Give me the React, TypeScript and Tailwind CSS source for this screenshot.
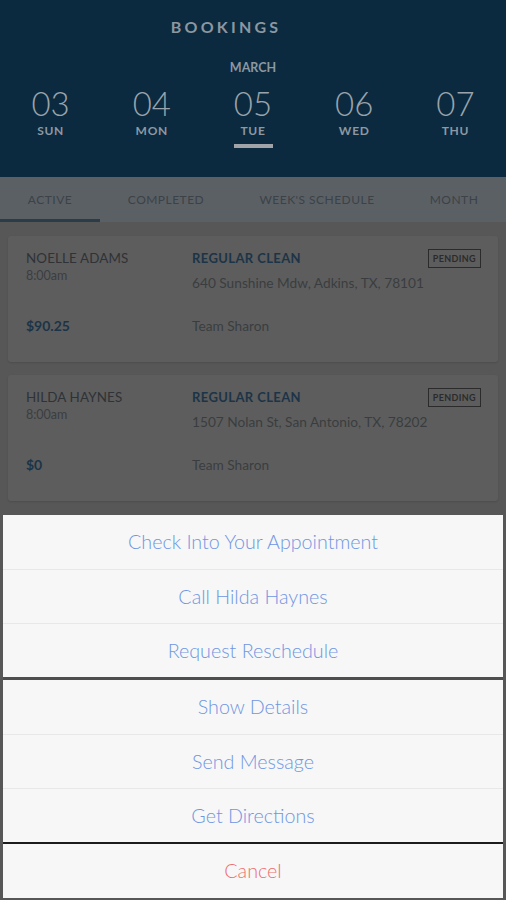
import { Fragment } from "react";

const days = [
  { num: "03", name: "SUN" },
  { num: "04", name: "MON" },
  { num: "05", name: "TUE", active: true },
  { num: "06", name: "WED" },
  { num: "07", name: "THU" },
];

const tabs = [
  { label: "ACTIVE", w: "w-[100px]", active: true },
  { label: "COMPLETED", w: "w-[132px]" },
  { label: "WEEK'S SCHEDULE", w: "w-[170px]" },
  { label: "MONTH", w: "flex-1" },
];

const bookings = [
  {
    name: "NOELLE ADAMS",
    time: "8:00am",
    price: "$90.25",
    service: "REGULAR CLEAN",
    address: "640 Sunshine Mdw, Adkins, TX, 78101",
    team: "Team Sharon",
  },
  {
    name: "HILDA HAYNES",
    time: "8:00am",
    price: "$0",
    service: "REGULAR CLEAN",
    address: "1507 Nolan St, San Antonio, TX, 78202",
    team: "Team Sharon",
  },
];

const groups = [
  ["Check Into Your Appointment", "Call Hilda Haynes", "Request Reschedule"],
  ["Show Details", "Send Message", "Get Directions"],
];

function BookingCard({ b }: { b: (typeof bookings)[number] }) {
  return (
    <div className="mx-2 flex h-[126px] rounded-[3px] bg-[#5d5d5d] pl-[18px] pr-[17px] pt-[14px] shadow-[0_1px_2px_rgba(0,0,0,0.12)]">
      <div className="flex w-[166px] flex-col pb-[28px]">
        <div className="text-[13.4px] leading-4 tracking-[0.01em] text-[#2f3236]">{b.name}</div>
        <div className="mt-[2px] text-[12.5px] leading-4 text-[#3b3e42]">{b.time}</div>
        <div className="mt-auto text-[14px] font-bold leading-4 text-[#1c3447]">{b.price}</div>
      </div>
      <div className="flex flex-1 flex-col pb-[28px]">
        <div className="flex items-start justify-between">
          <div className="text-[13px] font-bold leading-4 tracking-[0.03em] text-[#1c3447]">{b.service}</div>
          <div className="-mt-[1px] flex h-[19px] items-center border-[1.5px] border-[#2b2b2b] px-[4px] text-[9px] font-bold tracking-[0.04em] text-[#2b2b2b]">
            PENDING
          </div>
        </div>
        <div className="mt-[7px] text-[13.7px] leading-4 text-[#3a3d40]">{b.address}</div>
        <div className="mt-auto text-[13.7px] leading-4 text-[#3a3d40]">{b.team}</div>
      </div>
    </div>
  );
}

export default function App() {
  return (
    <div className="relative h-[900px] w-[506px] overflow-hidden bg-[#575757] font-['Lato','Noto_Sans',sans-serif]">
      <div className="flex h-[177px] flex-col items-center bg-[#0b2a3f] pt-[17px]">
        <div className="pr-[54px] text-[16px] font-bold leading-5 tracking-[0.2em] text-[#8c97a1]">BOOKINGS</div>
        <div className="mt-[23px] text-[12.5px] font-bold leading-4 text-[#8c97a1]">MARCH</div>
        <div className="mt-[11px] flex w-full">
          {days.map((d) => (
            <div key={d.num} className="flex flex-1 flex-col items-center">
              <div className="text-[33px] font-light leading-8 text-[#9aa3ab]">{d.num}</div>
              <div className="mt-[5px] text-[12px] font-bold leading-[14px] tracking-[0.06em] text-[#8d98a2]">{d.name}</div>
              {d.active && <div className="mt-[6px] h-[4px] w-[39px] bg-[#a0a4a8]" />}
            </div>
          ))}
        </div>
      </div>

      <div className="flex h-[45px] bg-[#5b6065]">
        {tabs.map((t) => (
          <div
            key={t.label}
            className={`${t.w} relative flex items-center justify-center text-[12px] tracking-[0.04em] text-[#3c4247]`}
          >
            {t.label}
            {t.active && <div className="absolute bottom-0 left-0 h-[3px] w-full bg-[#2b3b48]" />}
          </div>
        ))}
      </div>

      <div className="flex flex-col gap-[13px] pt-[14px]">
        {bookings.map((b) => (
          <BookingCard key={b.name} b={b} />
        ))}
      </div>

      <div className="absolute bottom-0 left-0 right-0 flex flex-col px-[3px] pb-[2px] text-[19.7px] font-light">
        {groups.map((g, gi) => (
          <Fragment key={gi}>
            <div className="flex flex-col bg-[#f7f7f7]">
              {g.map((label, i) => (
                <div
                  key={label}
                  className={`flex h-[54px] items-center justify-center text-[#6f96e2] ${i > 0 ? "border-t border-[#e8e8e8]" : ""}`}
                >
                  {label}
                </div>
              ))}
            </div>
            <div className={gi === 0 ? "h-[3px] bg-[#4e4e4e]" : "h-[2px] bg-[#1c1c1c]"} />
          </Fragment>
        ))}
        <div className="flex h-[54px] items-center justify-center bg-[#f7f7f7] text-[#ec6f6f]">Cancel</div>
      </div>
    </div>
  );
}
